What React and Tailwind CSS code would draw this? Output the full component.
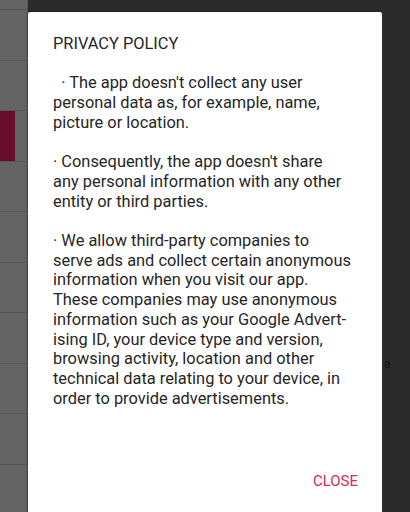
import React from "react";

const lines1 = [
  "\u00a0\u00a0\u00b7 The app doesn't collect any user",
  "personal data as, for example, name,",
  "picture or location.",
];

const lines2 = [
  "\u00b7 Consequently, the app doesn't share",
  "any personal information with any other",
  "entity or third parties.",
];

const lines3 = [
  "\u00b7 We allow third-party companies to",
  "serve ads and collect certain anonymous",
  "information when you visit our app.",
  "These companies may use anonymous",
  "information such as your Google Advert-",
  "ising ID, your device type and version,",
  "browsing activity, location and other",
  "technical data relating to your device, in",
  "order to provide advertisements.",
];

const Para = ({ lines }) => (
  <p className="mt-[19.7px]">
    {lines.map((l, i) => (
      <span key={i} className="block whitespace-nowrap">
        {l}
      </span>
    ))}
  </p>
);

const App = () => {
  const rows = [0, 1, 2, 3, 4, 5, 6, 7, 8];

  return (
    <div
      className="w-[410px] h-[512px] overflow-hidden flex bg-[#2b2b2b]"
      style={{ fontFamily: "Roboto, 'Noto Sans', sans-serif" }}
    >
      {/* Left dimmed list */}
      <div className="w-[28px] h-full bg-[#646464] flex flex-col shrink-0 border-r border-[#595959]">
        <div className="h-[10px] border-b border-[#555]"></div>
        {rows.map((r) => (
          <div key={r} className="h-[50.5px] border-b border-[#575757] flex">
            {r === 2 && <div className="w-[15px] h-full bg-[#680d2b]"></div>}
          </div>
        ))}
      </div>

      {/* Dialog */}
      <div className="w-[354px] mt-[12px] h-[520px] bg-white rounded-t-[2px] shadow-[0_0_3px_rgba(0,0,0,0.5)] shrink-0 flex flex-col px-[25px] pt-[22px] text-[16.4px] leading-[19.7px] text-[#262626]">
        <h2 className="uppercase">PRIVACY POLICY</h2>
        <div>
          <Para lines={lines1} />
          <Para lines={lines2} />
          <Para lines={lines3} />
        </div>
        <div className="flex justify-end mt-[64px] -mr-[1px]">
          <button className="text-[#d42b63] text-[15px] uppercase">
            CLOSE
          </button>
        </div>
      </div>

      {/* Right dark strip */}
      <div className="flex-1 h-full bg-[#2b2b2b] relative">
        <span className="absolute left-[2px] top-[355px] text-[12px] text-[#151515]">
          a
        </span>
      </div>
    </div>
  );
};

export default App;
